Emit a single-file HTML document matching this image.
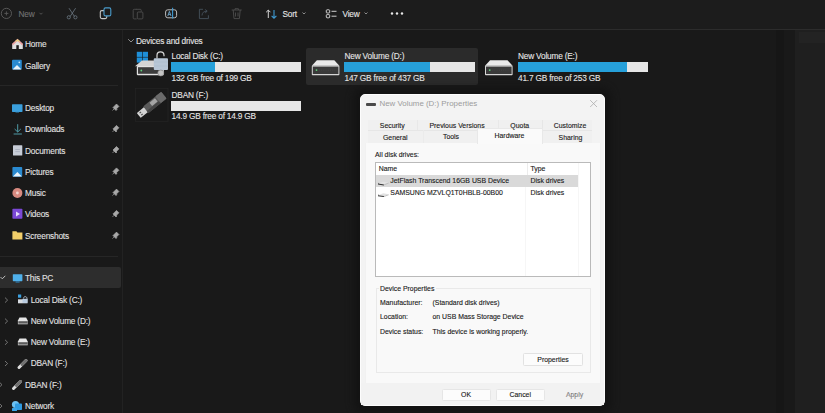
<!DOCTYPE html>
<html><head><meta charset="utf-8">
<style>
*{margin:0;padding:0;box-sizing:border-box}
html,body{width:825px;height:413px;overflow:hidden;background:#191919}
body{position:relative;font-family:"Liberation Sans",sans-serif;color:#e4e4e4}
.a{position:absolute}
.t{position:absolute;white-space:nowrap;line-height:12px;height:12px}
#tb{left:0;top:0;width:825px;height:30px;background:#1c1c1c;border-bottom:1px solid #2c2c2c}
.ex{font-size:8.3px;letter-spacing:-0.2px;color:#e6e6e6;-webkit-text-stroke:0.1px #e6e6e6}
.sb{font-size:8.3px;letter-spacing:-0.2px;color:#e2e2e2;-webkit-text-stroke:0.1px #e2e2e2}
.dlg{font-size:6.9px;color:#1a1a1a;-webkit-text-stroke:0.12px #1a1a1a}
.bar{position:absolute;height:10px;background:#e6e6e6}
.bar i{position:absolute;left:0;top:0;bottom:0;background:#26a0da}
svg{position:absolute;overflow:visible}
</style></head><body>

<!-- toolbar -->
<div id="tb" class="a"></div>
<!-- right strip -->
<div class="a" style="left:776px;top:30px;width:8px;height:383px;background:#161616"></div>
<div class="a" style="left:795px;top:30px;width:30px;height:383px;background:#1f1f1f"></div>
<div class="a" style="left:799px;top:32px;width:26px;height:11px;background:#232323"></div>

<!-- toolbar icons -->
<svg style="left:0;top:0" width="420" height="29" viewBox="0 0 420 29">
  <circle cx="6.4" cy="13.4" r="5.1" fill="none" stroke="#5c5c5c" stroke-width="0.9"/>
  <path d="M6.4 11.4v4M4.4 13.4h4" stroke="#5a5a5a" stroke-width="0.9"/>
  <path d="M39.5 12.8l1.5 1.5 1.5-1.5" fill="none" stroke="#606060" stroke-width="0.8"/>
  <!-- scissors -->
  <g stroke="#6c7884" stroke-width="0.8" fill="none">
    <path d="M69 8.2l5.5 8.3M75.6 8.2l-5.5 8.3"/>
    <circle cx="68.8" cy="17.3" r="1.6"/><circle cx="75.4" cy="17.3" r="1.6"/>
  </g>
  <!-- copy -->
  <g fill="none" stroke-width="1.1">
    <rect x="100.3" y="10.6" width="6.5" height="8" rx="1.5" stroke="#c4c4c4"/>
    <rect x="104" y="7.9" width="6.8" height="8" rx="1.5" stroke="#4a9ccc" fill="#1c1c1c"/>
  </g>
  <!-- paste -->
  <g fill="none" stroke="#4e4e4e" stroke-width="0.9">
    <path d="M136.5 9.3h-2.3a1 1 0 0 0-1 1v7.6a1 1 0 0 0 1 1h2.5"/><rect x="137.3" y="12" width="5.6" height="6.9" rx="1"/><path d="M136 9.3h4.2a1 1 0 0 1 1 1v1.4"/>
  </g>
  <!-- rename -->
  <g fill="none" stroke-width="1">
    <rect x="165.6" y="9.8" width="11" height="8" rx="2.2" stroke="#bdbdbd"/>
    <path d="M172.6 7.8v10.8" stroke="#3f9ad2" stroke-width="1.1"/>
    <path d="M167.8 16l1.6-4.6 1.6 4.6M168.4 14.4h2" stroke="#7ab8e0" stroke-width="0.8"/>
  </g>
  <!-- share -->
  <g fill="none" stroke="#46525c" stroke-width="0.9">
    <path d="M203 9.3h-3.6v9.3h9v-3.3"/><path d="M202 15.5c0-3 2-4.3 5-4.3M205.2 9.5l2 1.7-2 1.7"/>
  </g>
  <!-- delete -->
  <g fill="none" stroke="#4e4e4e" stroke-width="0.9">
    <path d="M231.7 10h10M233.2 10l0.8 8.6h5.4l0.8-8.6M235.5 12.5v4M238 12.5v4M235 10v-1.3h3.4v1.3"/>
  </g>
  <!-- sort -->
  <g fill="none" stroke-width="1">
    <path d="M268.3 18V10M266.2 12.2l2.1-2.1 2.1 2.1" stroke="#d4d4d4"/>
    <path d="M274 10v8.2M271.6 15.8l2.4 2.4 2.4-2.4" stroke="#3f9ad2" stroke-width="1.1"/>
  </g>
  <path d="M302.5 12.5l1.5 1.5 1.5-1.5" fill="none" stroke="#aaa" stroke-width="0.8"/>
  <!-- view -->
  <g fill="none" stroke="#cfcfcf" stroke-width="1">
    <rect x="326.3" y="9.8" width="3.4" height="3.2" rx="0.8"/><rect x="326.3" y="14.6" width="3.4" height="3.2" rx="0.8"/>
    <path d="M331.5 11.3h5M331.5 16.2h5"/>
  </g>
  <path d="M364.5 12.5l1.5 1.5 1.5-1.5" fill="none" stroke="#aaa" stroke-width="0.8"/>
  <g fill="#e8e8e8"><circle cx="392" cy="13.5" r="1.2"/><circle cx="397" cy="13.5" r="1.2"/><circle cx="402" cy="13.5" r="1.2"/></g>
</svg>
<div class="t ex" style="left:18.5px;top:7.8px;color:#727272;-webkit-text-stroke:0.1px #727272">New</div>
<div class="t ex" style="left:282.5px;top:7.6px">Sort</div>
<div class="t ex" style="left:342.5px;top:7.6px">View</div>

<!-- sidebar -->
<div class="a" style="left:122px;top:30px;width:1px;height:383px;background:#222"></div>
<div class="a" style="left:0;top:85px;width:118px;height:1px;background:#262626"></div>
<div class="a" style="left:0;top:256px;width:118px;height:1px;background:#262626"></div>
<div class="a" style="left:0;top:267px;width:120.7px;height:21.2px;background:#2d2d2d;border-radius:0 2px 2px 0"></div>

<!-- sidebar items -->
<div class="t sb" style="left:25px;top:38.0px">Home</div>
<div class="t sb" style="left:25px;top:59.8px">Gallery</div>
<div class="t sb" style="left:25px;top:101.9px">Desktop</div>
<div class="t sb" style="left:25px;top:123.3px">Downloads</div>
<div class="t sb" style="left:25px;top:144.5px">Documents</div>
<div class="t sb" style="left:25px;top:165.8px">Pictures</div>
<div class="t sb" style="left:25px;top:187.1px">Music</div>
<div class="t sb" style="left:25px;top:208.4px">Videos</div>
<div class="t sb" style="left:25px;top:229.9px">Screenshots</div>
<div class="t sb" style="left:25px;top:272.3px">This PC</div>
<div class="t sb" style="left:30.7px;top:293.6px">Local Disk (C:)</div>
<div class="t sb" style="left:30.7px;top:315.0px">New Volume (D:)</div>
<div class="t sb" style="left:30.7px;top:336.1px">New Volume (E:)</div>
<div class="t sb" style="left:30.7px;top:357.3px">DBAN (F:)</div>
<div class="t sb" style="left:25px;top:378.6px">DBAN (F:)</div>
<div class="t sb" style="left:25px;top:399.9px">Network</div>
<svg style="left:0;top:30px" width="122" height="383" viewBox="0 30 122 383">
  <!-- home -->
  <path d="M12.2 44.2l5.3-5 5.3 5v4.8h-10.6z" fill="#dedede"/>
  <path d="M12.4 44.6l5.1-4.8 5.1 4.8" fill="none" stroke="#e8a0a0" stroke-width="1.6"/>
  <path d="M15.5 41.5l2-1.6 2 1.6" fill="none" stroke="#ecd27a" stroke-width="1.2"/>
  <path d="M16.3 45.2h2.5v3.8h-2.5z" fill="#1a1a1a"/>
  <!-- gallery -->
  <rect x="12" y="59.8" width="9.8" height="9.8" rx="1" fill="#2a8ad0"/>
  <path d="M12.5 69.4l4.5-4.3 4.5 4.3z" fill="#e8f4fc"/>
  <circle cx="19.3" cy="62.3" r="0.9" fill="#bfe3fa"/>
  <!-- desktop -->
  <rect x="12" y="104.3" width="10.5" height="7.6" rx="0.6" fill="#3a9fdc"/>
  <rect x="15.5" y="111.9" width="3.5" height="0.8" fill="#2a6a90"/>
  <!-- downloads -->
  <path d="M17.7 124.2v7.8M14.6 129l3.1 3 3.1-3M13.6 134h8.3" fill="none" stroke="#4f9aa6" stroke-width="1"/>
  <!-- documents -->
  <rect x="13" y="145.2" width="9.3" height="10.4" rx="0.6" fill="#c7ccd6"/>
  <path d="M15.3 149.5h4.6M15.3 151.6h4.6" stroke="#9aa3b2" stroke-width="0.6"/>
  <!-- pictures -->
  <rect x="12.4" y="167" width="9.8" height="9.8" rx="0.8" fill="#2a8ad0"/>
  <path d="M12.9 176.6l4.5-4.5 4.5 4.5z" fill="#e8f4fc"/>
  <!-- music -->
  <circle cx="17.4" cy="193" r="5" fill="#d88a80"/>
  <circle cx="17.4" cy="193" r="1.4" fill="#f2d4cf"/>
  <!-- videos -->
  <rect x="12.4" y="208.8" width="10" height="10" rx="0.8" fill="#7b48d6"/>
  <path d="M16 211.5v5l4-2.5z" fill="#e6dcfa"/>
  <!-- folder -->
  <path d="M12.4 231.2h4l1 1.2h5v7h-10z" fill="#f2cf6a"/>
  <!-- pins -->
<path transform="translate(0,0.0)" d="M112.5 110.5l2.5-2.5M114 106.5l2.5-2.5 2.4 2.4-2.5 2.5 .6.6-1 1-3-3 1-1z" fill="#a8a8a8" stroke="#a8a8a8" stroke-width="0.7"/>
<path transform="translate(0,21.4)" d="M112.5 110.5l2.5-2.5M114 106.5l2.5-2.5 2.4 2.4-2.5 2.5 .6.6-1 1-3-3 1-1z" fill="#a8a8a8" stroke="#a8a8a8" stroke-width="0.7"/>
<path transform="translate(0,42.5)" d="M112.5 110.5l2.5-2.5M114 106.5l2.5-2.5 2.4 2.4-2.5 2.5 .6.6-1 1-3-3 1-1z" fill="#a8a8a8" stroke="#a8a8a8" stroke-width="0.7"/>
<path transform="translate(0,63.9)" d="M112.5 110.5l2.5-2.5M114 106.5l2.5-2.5 2.4 2.4-2.5 2.5 .6.6-1 1-3-3 1-1z" fill="#a8a8a8" stroke="#a8a8a8" stroke-width="0.7"/>
<path transform="translate(0,85.1)" d="M112.5 110.5l2.5-2.5M114 106.5l2.5-2.5 2.4 2.4-2.5 2.5 .6.6-1 1-3-3 1-1z" fill="#a8a8a8" stroke="#a8a8a8" stroke-width="0.7"/>
<path transform="translate(0,106.4)" d="M112.5 110.5l2.5-2.5M114 106.5l2.5-2.5 2.4 2.4-2.5 2.5 .6.6-1 1-3-3 1-1z" fill="#a8a8a8" stroke="#a8a8a8" stroke-width="0.7"/>
<path transform="translate(0,128.1)" d="M112.5 110.5l2.5-2.5M114 106.5l2.5-2.5 2.4 2.4-2.5 2.5 .6.6-1 1-3-3 1-1z" fill="#a8a8a8" stroke="#a8a8a8" stroke-width="0.7"/>

  <!-- this pc chevron -->
  <path d="M0.5 277l1.8 1.8 3-3" fill="none" stroke="#cfcfcf" stroke-width="0.9"/>
  <!-- this pc icon -->
  <rect x="12.8" y="274.2" width="9.6" height="7" rx="0.6" fill="#4fb0ea"/>
  <rect x="15.6" y="281.4" width="4" height="1.2" fill="#2f7fb5"/>
  <!-- nested chevrons -->
  <g fill="none" stroke="#8a8a8a" stroke-width="0.8">
    <path d="M5 297.6l2.6 2.5-2.6 2.5M5 318.6l2.6 2.5-2.6 2.5M5 339.8l2.6 2.5-2.6 2.5M5 361l2.6 2.5-2.6 2.5M-0.6 382.2l2.6 2.5-2.6 2.5M-0.6 403.5l2.6 2.5-2.6 2.5"/>
  </g>
  <!-- local disk small -->
  <rect x="18" y="294.5" width="3.2" height="3.2" fill="#3aa0e0"/>
  <path d="M18 299.3h9.5v4h-9.5z" fill="#d8dde2"/>
  <path d="M23.5 298.5c0-2.5 3.5-2.5 3.5 0v1" fill="none" stroke="#c8d4e0" stroke-width="0.8"/>
  <rect x="22.5" y="298.8" width="5" height="4" fill="#b8cbe0"/>
  <!-- nv d/e small -->
  <path d="M19.5 317.6h6.6l1.6 3v3.6h-9.8v-3.6z" fill="#e6e6e6"/>
  <rect x="18.3" y="321.2" width="9.4" height="2.4" fill="#5a5a5a"/>
  <path d="M19.5 338.6h6.6l1.6 3v3.6h-9.8v-3.6z" fill="#e6e6e6"/>
  <rect x="18.3" y="342.2" width="9.4" height="2.4" fill="#5a5a5a"/>
  <!-- usb small -->
  <path d="M19 367.5l7-7" stroke="#dcdcdc" stroke-width="3" stroke-linecap="round"/>
  <path d="M22 364.5l4-4" stroke="#707070" stroke-width="3" stroke-linecap="round"/>
  <path d="M13.5 388.5l7-7" stroke="#dcdcdc" stroke-width="3" stroke-linecap="round"/>
  <path d="M16.5 385.5l4-4" stroke="#707070" stroke-width="3" stroke-linecap="round"/>
  <!-- network -->
  <circle cx="15.5" cy="404.5" r="3.6" fill="#6cc0f2"/>
  <rect x="15" y="403.5" width="7" height="6.6" rx="0.8" fill="#2f9ae0"/>
  <rect x="12" y="408" width="5" height="3" rx="0.5" fill="#3aa4e8"/>
</svg>


<!-- content -->
<svg style="left:127px;top:37px" width="8" height="8"><path d="M1.2 2.2l2.8 2.8 2.8-2.8" fill="none" stroke="#aaa" stroke-width="0.8"/></svg>
<div class="t ex" style="left:136px;top:34.5px">Devices and drives</div>

<div class="a" style="left:306px;top:48.3px;width:172px;height:37px;background:#2b2b2b;border-radius:2px"></div>

<div class="t ex" style="left:171.5px;top:50px">Local Disk (C:)</div>
<div class="bar" style="left:171px;top:62px;width:130px"><i style="width:44px"></i></div>
<div class="t ex" style="left:171.5px;top:71.5px">132 GB free of 199 GB</div>

<div class="t ex" style="left:344.5px;top:50px">New Volume (D:)</div>
<div class="bar" style="left:344px;top:62px;width:130.5px"><i style="width:86px"></i></div>
<div class="t ex" style="left:344.5px;top:71.5px">147 GB free of 437 GB</div>

<div class="t ex" style="left:518px;top:50px">New Volume (E:)</div>
<div class="bar" style="left:518px;top:62px;width:130px"><i style="width:108.5px"></i></div>
<div class="t ex" style="left:518px;top:71.5px">41.7 GB free of 253 GB</div>

<div class="t ex" style="left:171.5px;top:89px">DBAN (F:)</div>
<div class="bar" style="left:171px;top:101px;width:130px"></div>
<div class="t ex" style="left:171.5px;top:109.8px">14.9 GB free of 14.9 GB</div>

<svg style="left:130px;top:45px" width="50" height="85" viewBox="130 45 50 85">
  <!-- Local disk C -->
  <g fill="#1e8fd8">
    <rect x="136.8" y="51.8" width="5.3" height="5.1"/><rect x="142.7" y="51.8" width="5.3" height="5.1"/>
    <rect x="136.8" y="57.5" width="5.3" height="5.1"/><rect x="142.7" y="57.5" width="5.3" height="5.1"/>
  </g>
  <path d="M142 60.5h13l3 5.7h-23z" fill="#d4d4d4"/>
  <rect x="136.8" y="66" width="27" height="9.3" rx="1" fill="#e2e2e2"/>
  <rect x="138" y="67.2" width="24.6" height="6.6" fill="#3c3c3c"/>
  <circle cx="141.3" cy="70.5" r="0.9" fill="#5fd07a"/>
  <path d="M157 58.5v-3.2a3.5 3.5 0 0 1 7 0v1" fill="none" stroke="#d8d8d8" stroke-width="1.2"/>
  <rect x="153.8" y="58.2" width="14.2" height="11.8" rx="1" fill="#b7c6d6"/>
  <path d="M154 62h14M154 66h14" stroke="#a8b8c8" stroke-width="0.5"/>
  <circle cx="160.8" cy="73" r="3" fill="#c4c4c4" stroke="#8a8a8a" stroke-width="0.6"/>
  <!-- USB F -->
  <rect x="135.5" y="88.5" width="32.5" height="33" fill="none" stroke="#242424" stroke-width="0.8"/>
  <g transform="rotate(-39 151.3 105.3)">
    <rect x="135.2" y="102.2" width="9.5" height="6.2" rx="0.5" fill="#d2d2d2"/>
    <rect x="137.3" y="103.4" width="1.8" height="1.2" fill="#505050"/><rect x="137.3" y="106" width="1.8" height="1.2" fill="#505050"/>
    <rect x="144.2" y="101" width="23.3" height="8.6" rx="1.2" fill="#5a5a5a"/>
    <rect x="144.2" y="106.8" width="23.3" height="2.8" fill="#444"/>
    <rect x="160" y="101" width="7.5" height="8.6" rx="1" fill="#6a6a6a"/>
    <rect x="151.5" y="102.2" width="7" height="4.2" fill="#a4a4a4"/>
  </g>
</svg>
<svg style="left:305px;top:55px" width="220" height="25" viewBox="305 55 220 25">
  <g id="drv">
    <path d="M316.9 60.3h17.4l5.1 5.5h-27.6z" fill="#e9e9e9"/>
    <rect x="311.8" y="65.6" width="27.6" height="9.6" rx="0.8" fill="#d6d6d6"/>
    <rect x="312.8" y="66.6" width="25.6" height="7.4" fill="#3a3a3a"/>
    <path d="M319 70.2h18" stroke="#4e4e4e" stroke-width="0.6" stroke-dasharray="1 1.2"/>
    <circle cx="316.5" cy="70.1" r="0.9" fill="#5fd07a"/>
  </g>
  <use href="#drv" transform="translate(173.2 0)"/>
</svg>


<!-- dialog -->
<!-- dialog -->
<div class="a" style="left:354px;top:88px;width:257px;height:325px;background:#111;border-radius:9px;filter:blur(4px);opacity:.8"></div>
<div class="a" style="left:360px;top:94px;width:245px;height:312px;background:#f3f3f3;border-radius:5px;border:1px solid #fdfdfd;overflow:hidden">
</div>
<div class="a" style="left:366px;top:103px;width:10px;height:3px;background:#4a4a4a;border-radius:1px"></div>
<div class="t" style="left:379.5px;top:97.6px;font-size:7.9px;color:#9c9c9c">New Volume (D:) Properties</div>
<svg style="left:589px;top:99px" width="10" height="10"><path d="M1.2 1.2l6.8 6.8M8 1.2l-6.8 6.8" stroke="#acacac" stroke-width="0.8"/></svg>

<!-- tab page -->
<div class="a" style="left:365px;top:142.5px;width:236px;height:240px;background:#f9f9f9;border:1px solid #f1f1f1;border-top:none;border-bottom:none"></div>
<!-- tab rows -->
<div class="a" style="left:368px;top:120px;width:224px;height:10px;background:#f0f0f0"></div>
<div class="a" style="left:368px;top:130px;width:224px;height:12.5px;background:#f0f0f0;border-top:1px solid #e6e6e6"></div>
<div class="a" style="left:416.5px;top:120px;width:1px;height:10px;background:#e8e8e8"></div>
<div class="a" style="left:497.5px;top:120px;width:1px;height:10px;background:#e8e8e8"></div>
<div class="a" style="left:542px;top:120px;width:1px;height:23px;background:#e6e6e6"></div>
<div class="a" style="left:422.5px;top:130px;width:1px;height:12.5px;background:#ebebeb"></div>
<div class="a" style="left:476.5px;top:128px;width:66px;height:15.5px;background:#fafafa;border:1px solid #e8e8e8;border-bottom:none"></div>
<div class="t dlg" style="left:368px;width:48.5px;text-align:center;top:120.5px;line-height:10px">Security</div>
<div class="t dlg" style="left:416.5px;width:81px;text-align:center;top:120.7px;line-height:10px">Previous Versions</div>
<div class="t dlg" style="left:497.5px;width:44.5px;text-align:center;top:120.7px;line-height:10px">Quota</div>
<div class="t dlg" style="left:545px;width:50px;text-align:center;top:120.7px;line-height:10px">Customize</div>
<div class="t dlg" style="left:368px;width:54.5px;text-align:center;top:132.5px;line-height:10px">General</div>
<div class="t dlg" style="left:424px;width:54px;text-align:center;top:132.3px;line-height:10px">Tools</div>
<div class="t dlg" style="left:476.5px;width:66px;text-align:center;top:131px;line-height:10px">Hardware</div>
<div class="t dlg" style="left:545.5px;width:50px;text-align:center;top:132.6px;line-height:10px">Sharing</div>

<div class="t dlg" style="left:375px;top:150.3px;line-height:10px">All disk drives:</div>
<!-- listbox -->
<div class="a" style="left:375px;top:162px;width:215.5px;height:115px;background:#fff;border:1px solid #bababa"></div>
<div class="a" style="left:527px;top:163px;width:1px;height:12px;background:#ececec"></div>
<div class="a" style="left:525px;top:187px;width:1px;height:89px;background:#f6f6f6"></div>
<div class="a" style="left:577.5px;top:163px;width:1px;height:113px;background:#f6f6f6"></div>
<div class="a" style="left:376px;top:175.2px;width:201.5px;height:11.4px;background:#d9d9d9"></div>
<div class="t dlg" style="left:378.8px;top:164.1px;line-height:10px">Name</div>
<div class="t dlg" style="left:530.5px;top:164.1px;line-height:10px">Type</div>
<div class="t dlg" style="left:390.3px;top:175.7px;line-height:10px">JetFlash Transcend 16GB USB Device</div>
<div class="t dlg" style="left:530.5px;top:175.7px;line-height:10px">Disk drives</div>
<div class="t dlg" style="left:390.3px;top:188.4px;line-height:10px">SAMSUNG MZVLQ1T0HBLB-00B00</div>
<div class="t dlg" style="left:530.5px;top:188.4px;line-height:10px">Disk drives</div>
<svg style="left:377px;top:176.6px" width="14" height="22" viewBox="0 0 14 22">
  <g id="li">
  <path d="M1.8 6.3l4.5-1.6 5.3 0.9-4.7 1.9z" fill="#e2e2e2"/>
  <path d="M6.9 7.5l4.7-1.9v1l-4.7 1.9z" fill="#bdbdbd"/>
  <path d="M1 6.6l5.9 0.9v1l-5.9-0.9z" fill="#2e2e2e"/>
  <path d="M1 6.6l1-0.4" stroke="#555" stroke-width="0.6"/>
  </g>
  <use href="#li" transform="translate(0 11.6)"/>
</svg>

<!-- group box -->
<div class="a" style="left:375.8px;top:287.8px;width:215.7px;height:84.8px;border:1px solid #e9e9e9"></div>
<div class="a" style="left:378.5px;top:284px;width:57px;height:9px;background:#f9f9f9"></div>
<div class="t dlg" style="left:380px;top:283.7px;line-height:10px">Device Properties</div>
<div class="t dlg" style="left:380px;top:298.3px;line-height:10px">Manufacturer:</div>
<div class="t dlg" style="left:432.5px;top:298.3px;line-height:10px">(Standard disk drives)</div>
<div class="t dlg" style="left:380px;top:312.4px;line-height:10px">Location:</div>
<div class="t dlg" style="left:432.5px;top:312.4px;line-height:10px">on USB Mass Storage Device</div>
<div class="t dlg" style="left:380px;top:326.9px;line-height:10px">Device status:</div>
<div class="t dlg" style="left:432.5px;top:326.9px;line-height:10px">This device is working properly.</div>
<div class="a" style="left:523px;top:353px;width:60px;height:13px;background:#fcfcfc;border:1px solid #e2e2e2;border-radius:1.5px"></div>
<div class="t dlg" style="left:523px;width:60px;text-align:center;top:354.6px;line-height:10px">Properties</div>

<!-- bottom bar -->
<div class="a" style="left:361px;top:382.5px;width:243px;height:22.5px;background:#f2f2f2"></div>
<div class="a" style="left:441.5px;top:388.5px;width:49px;height:12px;background:#fcfcfc;border:1px solid #e6e6e6;border-radius:1.5px"></div>
<div class="a" style="left:495.5px;top:388.5px;width:49.5px;height:12px;background:#fcfcfc;border:1px solid #e6e6e6;border-radius:1.5px"></div>
<div class="t dlg" style="left:441.5px;width:49px;text-align:center;top:390px;line-height:10px">OK</div>
<div class="t dlg" style="left:495.5px;width:49.5px;text-align:center;top:390px;line-height:10px">Cancel</div>
<div class="t dlg" style="left:553.5px;width:42px;text-align:center;top:390px;line-height:10px;color:#a8a8a8">Apply</div>


</body></html>
